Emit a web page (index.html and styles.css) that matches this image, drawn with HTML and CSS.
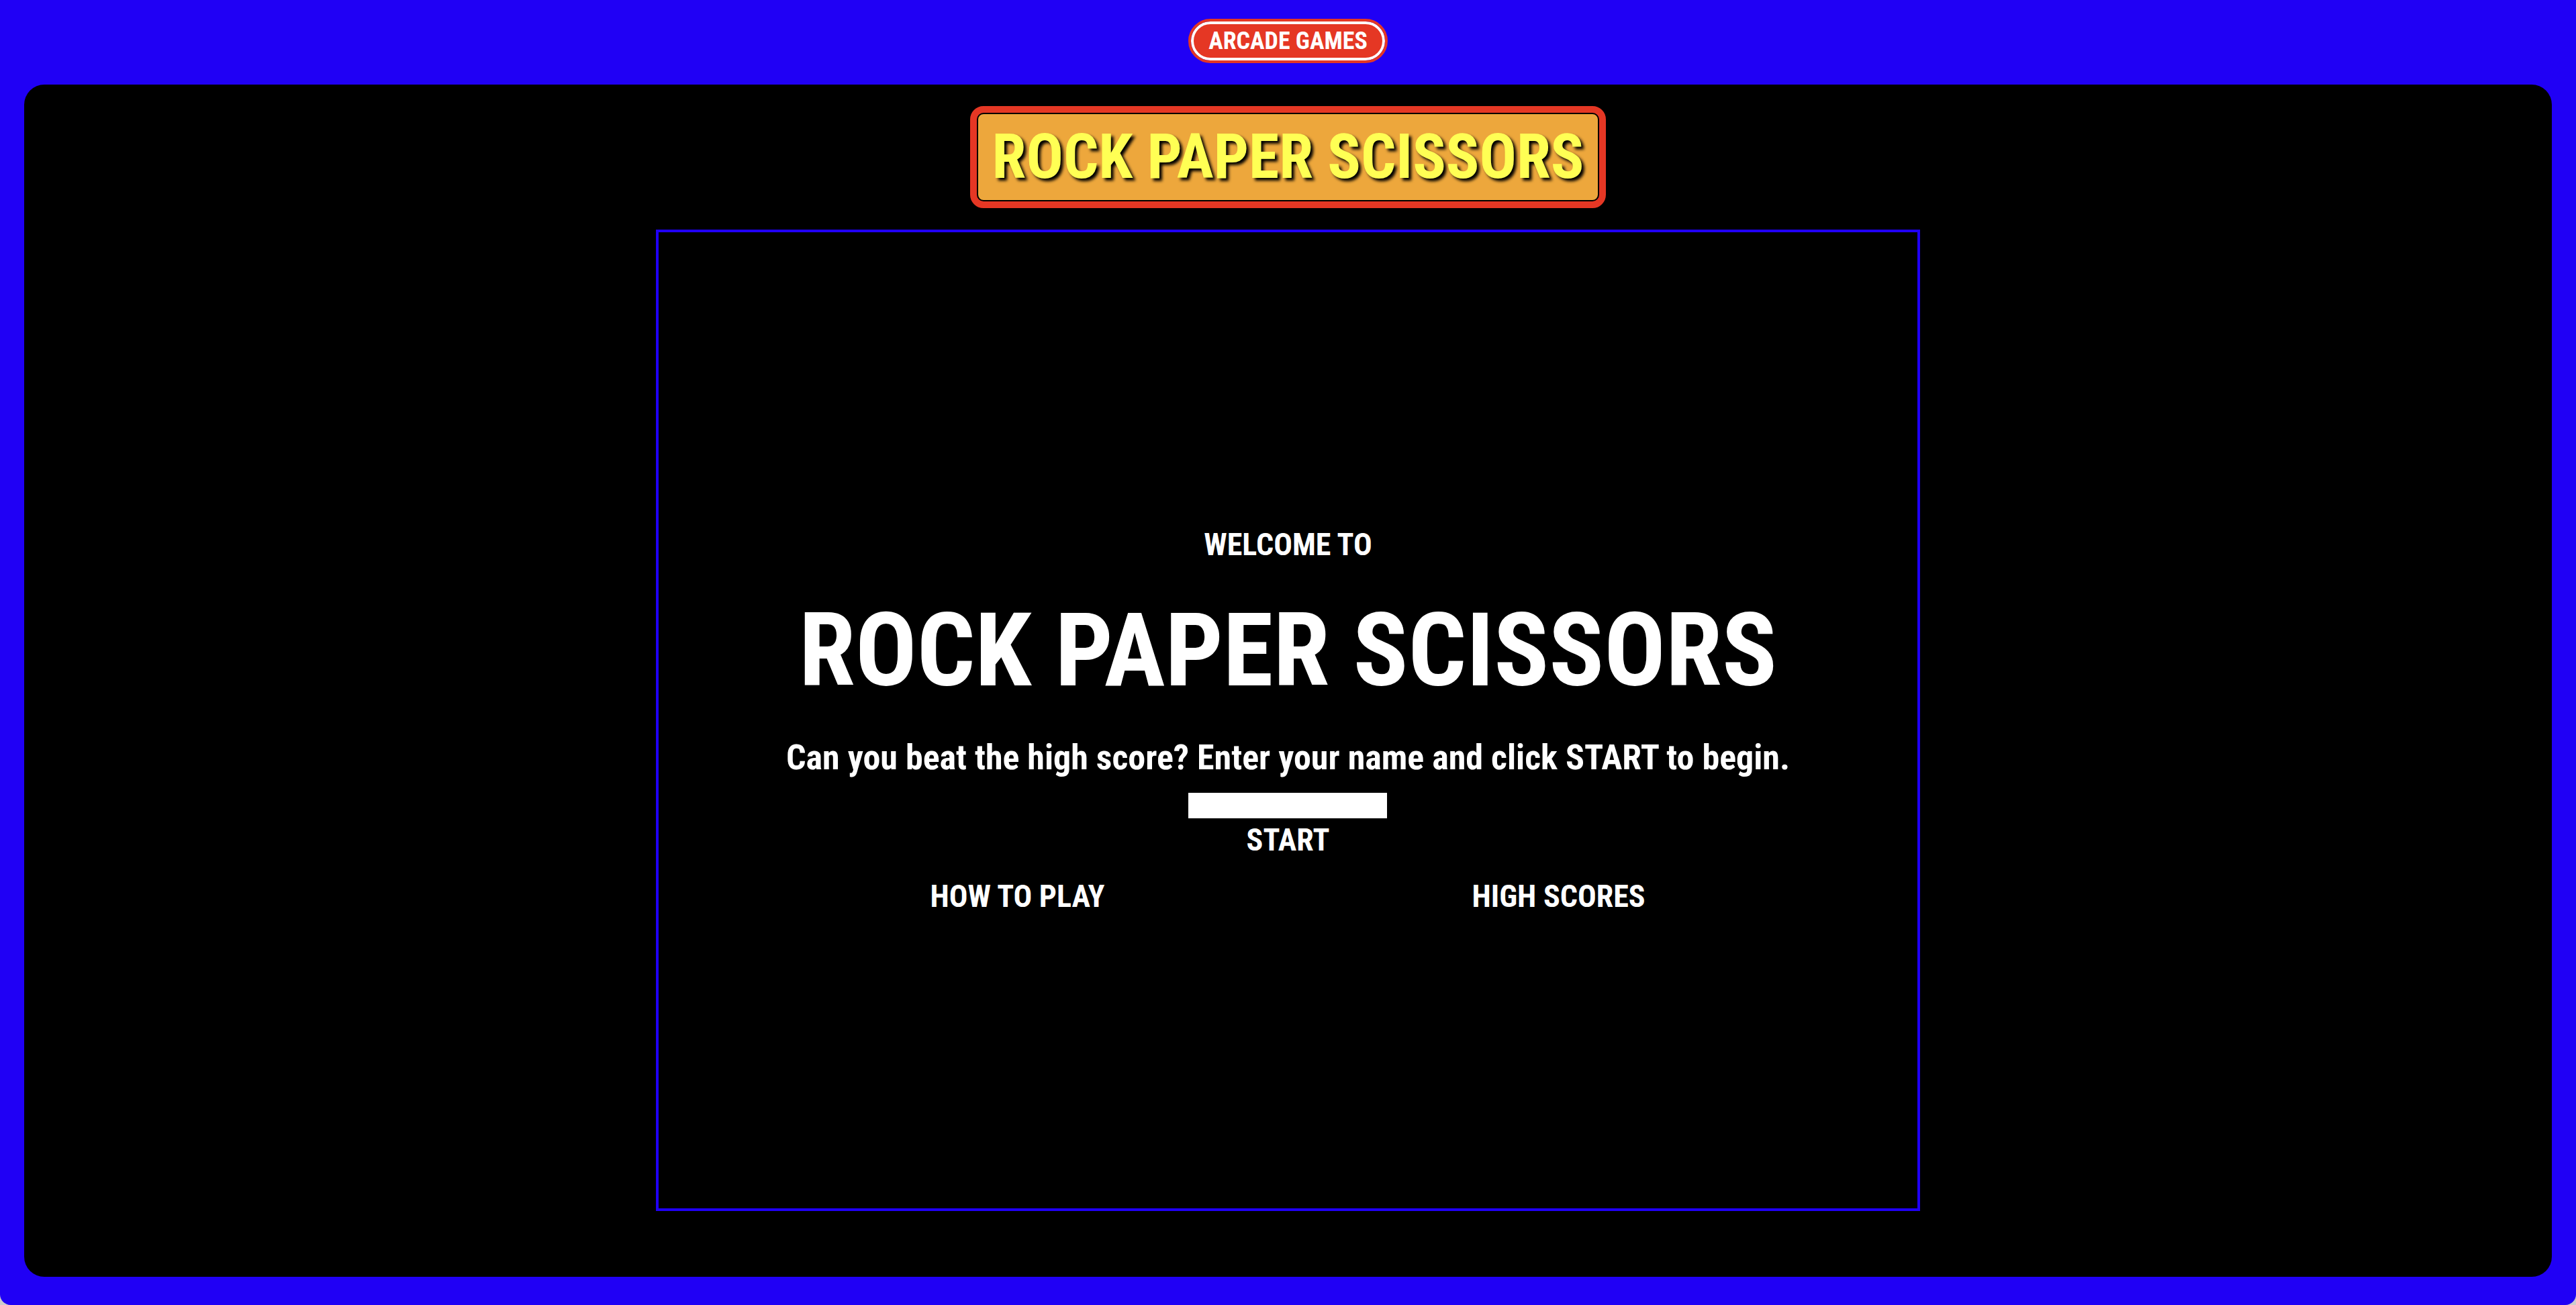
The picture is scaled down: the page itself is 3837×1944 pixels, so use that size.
FILE: index.html
```html
<!DOCTYPE html>
<html lang="en">
<head>
    <meta charset="UTF-8">
    <meta name="viewport" content="width=device-width, initial-scale=1.0">
    <title>Rock Paper Scissors</title>
    <link rel="stylesheet" href="styles.css">
</head>
<body>
    <div class="page">
        <header class="header">
            <a class="arcade-link" href="#">ARCADE GAMES</a>
        </header>

        <main class="cabinet">
            <h1 class="marquee">ROCK PAPER SCISSORS</h1>

            <!-- Game screen -->
            <section class="game">
                <p class="welcome">WELCOME TO</p>
                <h2 class="game-title">ROCK PAPER SCISSORS</h2>
                <form class="start-form">
                    <label class="intro" for="playerName">Can you beat the high score? Enter your name and click START to begin.</label>
                    <input class="name-input" id="playerName" type="text" autocomplete="off">
                    <button class="game-button" type="button">START</button>
                </form>
                <div class="menu">
                    <button class="game-button" type="button">HOW TO PLAY</button>
                    <button class="game-button" type="button">HIGH SCORES</button>
                </div>
            </section>
        </main>
    </div>
</body>
</html>
```
FILE: styles.css
```css
* {
    box-sizing: border-box;
    margin: 0;
    padding: 0;
}

html {
    background-color: #cccccc;
}

body {
    font-family: "Roboto Condensed", Roboto, sans-serif;
    font-weight: bold;
    color: white;
}

.page {
    display: flex;
    flex-direction: column;
    min-height: 100vh;
    background-color: #2000f5;
    border-radius: 0 0 16px 16px;
}

.header {
    display: flex;
    justify-content: center;
    padding: 28px 36px 32px;
}

.arcade-link {
    padding: 9px 22px;
    border: 4px solid white;
    border-radius: 33px;
    outline: 4px solid #e53724;
    margin: 4px;
    background-color: #e53724;
    color: white;
    font-size: 36px;
    line-height: 32px;
    text-decoration: none;
}

.cabinet {
    display: flex;
    flex: 1;
    flex-direction: column;
    align-items: center;
    gap: 32px;
    margin: 0 36px 42px;
    padding: 32px 0 98px;
    background-color: black;
    border-radius: 30px;
}

.marquee {
    padding: 0 20px;
    border: 2px solid black;
    border-radius: 10px;
    outline: 10px solid #e53724;
    margin: 10px;
    background-color: #eda73c;
    color: #ffff54;
    font-size: 92px;
    line-height: 128px;
    text-shadow: 4px 4px 4px black;
}

.game {
    display: flex;
    flex: 1;
    flex-direction: column;
    align-items: center;
    justify-content: center;
    width: 50%;
    border: 4px solid #2000f5;
    text-align: center;
}

.welcome,
.game-button {
    font-size: 46px;
    line-height: 64px;
}

.intro {
    font-size: 52px;
    line-height: 64px;
}

.game-title {
    margin: 30px 0 32px;
    font-size: 152px;
    line-height: 192px;
}

.start-form {
    display: flex;
    flex-direction: column;
    align-items: center;
}

.name-input {
    width: 296px;
    height: 38px;
    margin-top: 20px;
    padding: 0 4px;
    border: none;
    background-color: white;
    font-family: inherit;
    font-size: 28px;
}

.game-button {
    border: none;
    background: none;
    color: white;
    font-family: inherit;
    font-weight: inherit;
    cursor: pointer;
}

.menu {
    display: grid;
    grid-template-columns: 1fr 1fr;
    justify-items: center;
    width: 86%;
    margin-top: 20px;
}
```
